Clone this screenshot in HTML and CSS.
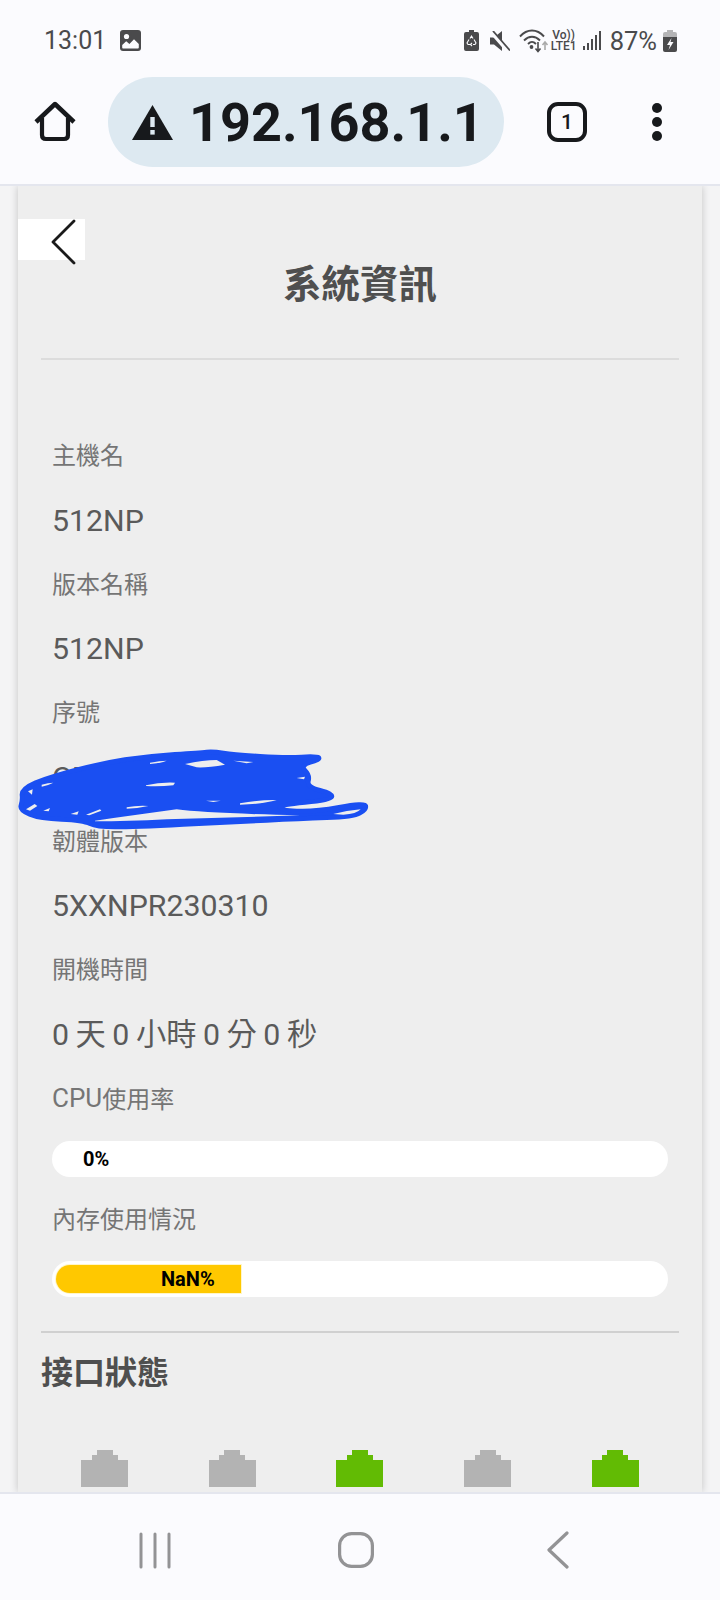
FILE: index.html

```html
<!DOCTYPE html>
<html lang="zh-TW">
<head>
  <meta charset="UTF-8" />
  <meta name="viewport" content="width=device-width, initial-scale=1.0"/>
  <title>系統資訊</title>
  <link rel="stylesheet" href="styles.css">
</head>
<body>
  <div class="phone">
    <div class="statusbar">
      <div class="status-left">
        <span class="time">13:01</span>
        <svg class="ico-gallery" width="21" height="21" viewBox="0 0 21 21">
          <rect x="0" y="0" width="21" height="21" rx="3" fill="#4a4a4c"/>
          <circle cx="6.5" cy="6.5" r="2.6" fill="#fbfbfe"/>
          <path d="M2.2 17.5v-2.6l4-3.6 3.2 2.6 4.6-4.6 4.8 4.8v3.4q0 .9-.9.9H3q-.8 0-.8-.9z" fill="#fbfbfe"/>
        </svg>
      </div>
      <div class="status-right">
        <svg class="ico-batt-saver" width="15" height="21" viewBox="0 0 15 21">
          <path d="M5 0h5v2h3q2 0 2 2v15q0 2-2 2H2q-2 0-2-2V4q0-2 2-2h3z" fill="#4a4a4c"/>
          <path d="M6 8.500l1.500-2.500 1.500 2.500M10 9.500l2 3.500-1 1.500H9M6.500 14.500H4l-1-1.500 2-3.500M8 13l-1.500 1.500L8 16" fill="none" stroke="#fbfbfe" stroke-width="1.100"/>
        </svg>
        <svg class="ico-mute" width="20" height="20" viewBox="0 0 20 20">
          <path d="M0 6.500h4L12 0v20l-8-6.500H0z" fill="#4a4a4c"/>
          <path d="M1 0.500l17 19.500" stroke="#fbfbfe" stroke-width="4"/>
          <path d="M3 0l17 19.500" stroke="#4a4a4c" stroke-width="1.800"/>
        </svg>
        <svg class="ico-wifi" width="30" height="24" viewBox="0 0 30 24">
          <g fill="none" stroke="#4a4a4c" stroke-width="1.900">
            <path d="M1 7.500C8-.5 18-.5 25 7.500"/>
            <path d="M5 11.500c5-5 11-5 16 0"/>
            <path d="M9 15c3-3 5-3 8 0"/>
          </g>
          <circle cx="12.500" cy="18" r="1.900" fill="#4a4a4c"/>
          <path d="M19 13v9M16.500 19.500l2.500 3 2.500-3" fill="none" stroke="#4a4a4c" stroke-width="1.600"/>
          <path d="M26 21v-8M23.500 16l2.500-3 2.500 3" fill="none" stroke="#aaaaaa" stroke-width="1.600"/>
        </svg>
        <span class="volte">Vo))<br>LTE1</span>
        <svg class="ico-signal" width="18" height="20" viewBox="0 0 18 20">
          <g fill="#4a4a4c">
            <rect x="0" y="15" width="2" height="4"/>
            <rect x="4" y="12" width="2" height="7"/>
            <rect x="8" y="8" width="2" height="11"/>
            <rect x="12" y="4" width="2" height="15"/>
            <rect x="16" y="0" width="2" height="19"/>
          </g>
        </svg>
        <span class="battery-pct">87%</span>
        <svg class="ico-battery" width="14" height="22" viewBox="0 0 14 22">
          <path d="M4 0h6v2h2q2 0 2 2v3H0V4q0-2 2-2h2z" fill="#b4b4b6"/>
          <path d="M0 7h14v13q0 2-2 2H2q-2 0-2-2z" fill="#4a4a4c"/>
          <path d="M8.500 8L4 15h3l-1.500 5 5-8H7.500z" fill="#fbfbfe"/>
        </svg>
      </div>
    </div>

    <div class="toolbar">
      <svg class="ico-home" width="42" height="42" viewBox="0 0 42 42">
        <path d="M2 21L21 3l19 18" fill="none" stroke="#17191c" stroke-width="4.500" stroke-linejoin="round"/>
        <path d="M8 17v17q0 4 4 4h18q4 0 4-4V17" fill="none" stroke="#17191c" stroke-width="4.200"/>
      </svg>
      <div class="urlbar">
        <svg class="ico-warn" width="41" height="35" viewBox="0 0 41 35">
          <path d="M20.500 0L41 35H0z" fill="#17191c"/>
          <rect x="18.300" y="12" width="4.400" height="10" fill="#dde9f1"/>
          <rect x="18.300" y="25" width="4.400" height="4.600" fill="#dde9f1"/>
        </svg>
        <span class="url">192.168.1.1</span>
      </div>
      <div class="tabs-btn">1</div>
      <div class="menu-btn"><i></i><i></i><i></i></div>
    </div>

    <div class="viewport">
      <div class="card">
        <div class="card-head">
          <div class="back-btn">
            <svg width="26" height="46" viewBox="0 0 26 46">
              <path d="M24 2L3 23l21 21" fill="none" stroke="#1a1a1a" stroke-width="2.800" stroke-linecap="round" stroke-linejoin="round"/>
            </svg>
          </div>
          <h2 class="title">系統資訊</h2>
        </div>

        <div class="info">
          <div class="row label">主機名</div>
          <div class="row value">512NP</div>
          <div class="row label">版本名稱</div>
          <div class="row value">512NP</div>
          <div class="row label">序號</div>
          <div class="row value serial">
            <span>CF</span>
            <!-- scribble covering the serial number -->
            <svg class="scribble" width="400" height="130" viewBox="0 0 1200 390">
              <path fill="#1a4ff2" stroke="#1a4ff2" stroke-width="14" stroke-linejoin="round" d="M66 188Q65 170 107 152Q150 135 225 115Q300 95 375 83Q450 72 525 67Q600 62 620 60Q640 58 670 63Q700 68 780 73Q860 78 905 75Q950 72 956 77Q962 82 931 91Q900 100 915 115Q930 130 925 147Q920 165 960 175Q1000 185 995 195Q990 205 915 211Q840 218 840 226Q840 235 890 237Q940 240 1017 226Q1095 212 1097 222Q1100 232 1080 243Q1060 255 980 257Q900 260 800 265Q700 270 550 277Q400 285 345 285Q290 285 270 275Q250 265 185 262Q120 260 89 247Q58 235 63 220Q68 205 66 188z"/>
              <g fill="#eeeeee" stroke="none">
                <path d="M555 96Q610 84 650 84L675 98Q620 108 590 106z"/>
                <path d="M438 160Q480 150 525 152L520 160Q480 164 438 162z"/>
                <path d="M720 214Q780 203 830 204 790 216 720 218z"/>
                <path d="M1000 246Q1040 236 1082 232 1070 246 1030 248z"/>
                <path d="M84 178L98 172 96 188z"/>
                <path d="M78 232L104 216 112 222 90 236z"/>
                <path d="M125 158Q145 152 160 152 145 160 125 164z"/>
                <path d="M130 236L150 228 146 238z"/>
                <path d="M212 246L236 238 232 248z"/>
                <path d="M258 248L300 232 304 236 268 250z"/>
                <path d="M380 226Q410 220 445 222 410 230 380 230z"/>
                <path d="M450 92Q480 86 500 86 480 94 450 96z"/>
                <path d="M700 86L760 90 740 94z"/>
                <path d="M618 206H662L640 210z"/>
                <path d="M285 266Q400 250 530 232 620 244 900 250 700 256 500 262 380 268 285 268z"/>
                <path d="M890 138L915 134 912 142z"/>
              </g>
            </svg>
          </div>
          <div class="row label">韌體版本</div>
          <div class="row value">5XXNPR230310</div>
          <div class="row label">開機時間</div>
          <div class="row value uptime">0 天 0 小時 0 分 0 秒</div>
          <div class="row label cpu-label"><span class="latin">CPU</span>使用率</div>
          <div class="bar-row cpu-row">
            <div class="bar"><span class="bar-text cpu-text">0%</span></div>
          </div>
          <div class="row label mem-label">內存使用情況</div>
          <div class="bar-row">
            <div class="bar"><div class="bar-fill" style="width: 185px"><span class="bar-text">NaN%</span></div></div>
          </div>
        </div>

        <div class="ports-section">
          <h3 class="subtitle">接口狀態</h3>
          <div class="ports">
            <div class="port"><i class="p1"></i><i class="p2"></i><i class="p3"></i></div>
            <div class="port"><i class="p1"></i><i class="p2"></i><i class="p3"></i></div>
            <div class="port on"><i class="p1"></i><i class="p2"></i><i class="p3"></i></div>
            <div class="port"><i class="p1"></i><i class="p2"></i><i class="p3"></i></div>
            <div class="port on"><i class="p1"></i><i class="p2"></i><i class="p3"></i></div>
          </div>
        </div>
      </div>
    </div>

    <div class="navbar">
      <svg class="nav-recent" width="32" height="38" viewBox="0 0 32 38">
        <path d="M2 3v33M16 3v33M30 3v33" stroke="#939395" stroke-width="3" stroke-linecap="round"/>
      </svg>
      <svg class="nav-home" width="36" height="38" viewBox="0 0 36 38">
        <rect x="1.600" y="2.600" width="32.800" height="32.800" rx="12" fill="none" stroke="#939395" stroke-width="3.200"/>
      </svg>
      <svg class="nav-back" width="22" height="38" viewBox="0 0 22 38">
        <path d="M20 2L2 19l18 17" fill="none" stroke="#939395" stroke-width="3.200" stroke-linecap="round" stroke-linejoin="round"/>
      </svg>
    </div>
  </div>
</body>
</html>
```

FILE: styles.css

```css
body {
  margin: 0;
  font-family: Roboto, "Noto Sans CJK TC", sans-serif;
  background: #fbfbfe;
}
h2, h3 {
  margin: 0;
}
svg {
  display: block;
  flex: none;
}
.phone {
  width: 720px;
  height: 1600px;
  display: flex;
  flex-direction: column;
  overflow: hidden;
}

/* status bar */
.statusbar {
  height: 77px;
  flex: none;
  padding: 4px 43px 0 44px;
  box-sizing: border-box;
  display: flex;
  align-items: center;
  justify-content: space-between;
  color: #4a4a4c;
}
.status-left {
  display: flex;
  align-items: center;
  gap: 14px;
}
.time {
  font-size: 25px;
}
.status-right {
  display: flex;
  align-items: center;
}
.ico-mute {
  margin-left: 11px;
}
.ico-wifi {
  margin-left: 9px;
}
.volte {
  width: 26px;
  margin-left: 2px;
  font-size: 12px;
  line-height: 11px;
  font-weight: 500;
  text-align: center;
  white-space: nowrap;
}
.ico-signal {
  margin-left: 6px;
}
.battery-pct {
  margin-left: 9px;
  font-size: 25.5px;
}
.ico-battery {
  margin-left: 6px;
}

/* browser toolbar */
.toolbar {
  height: 109px;
  flex: none;
  padding: 0 0 17px 34px;
  box-sizing: border-box;
  display: flex;
  align-items: center;
  border-bottom: 2px solid #e4e6ee;
}
.urlbar {
  width: 396px;
  height: 90px;
  margin-left: 32px;
  border-radius: 45px;
  background: #dde9f1;
  display: flex;
  align-items: center;
  padding-left: 24px;
  box-sizing: border-box;
}
.url {
  margin-left: 16px;
  font-size: 54px;
  font-weight: 700;
  color: #17191c;
  white-space: nowrap;
}
.tabs-btn {
  width: 40px;
  height: 40px;
  margin-left: 43px;
  border: 4px solid #17191c;
  border-radius: 11px;
  box-sizing: border-box;
  display: flex;
  align-items: center;
  justify-content: center;
  font-size: 21px;
  font-weight: 500;
  color: #17191c;
}
.menu-btn {
  margin-left: 65px;
  display: flex;
  flex-direction: column;
  gap: 4px;
}
.menu-btn i {
  width: 10px;
  height: 10px;
  border-radius: 50%;
  background: #17191c;
}

/* page */
.viewport {
  flex: 1;
  min-height: 0;
  background: #f4f4f5;
  overflow: hidden;
}
.card {
  margin: 0 18px;
  padding: 0 23px;
  height: 100%;
  background: #eeeeee;
  box-shadow: 0 0 8px rgba(0,0,0,0.2);
}
.card-head {
  padding-top: 34px;
  padding-bottom: 46px;
  border-bottom: 2px solid #dcdcdc;
}
.back-btn {
  width: 67px;
  height: 41px;
  margin-left: -23px;
  padding-left: 32px;
  box-sizing: border-box;
  background: white;
}
.back-btn svg {
  margin-top: -1px;
}
.title {
  height: 54px;
  margin-top: -2px;
  line-height: 54px;
  text-align: center;
  font-size: 38.5px;
  font-weight: 700;
  color: #4f4f4f;
}
.info {
  padding: 65px 0 0 11px;
}
.row {
  height: 64.25px;
  box-sizing: border-box;
  display: flex;
  align-items: center;
}
.label {
  padding-bottom: 7px;
  font-size: 24px;
  color: #757575;
}
.cpu-label {
  padding-bottom: 4px;
}
.latin {
  font-size: 26px;
}
.value {
  padding-bottom: 2px;
  font-size: 30.3px;
  color: #5a5a5a;
}
.uptime {
  padding-bottom: 6px;
  word-spacing: -1px;
}
.serial {
  position: relative;
}
.scribble {
  position: absolute;
  left: -52px;
  top: -14px;
}
.mem-label {
  height: 58px;
}
.bar-row {
  height: 60px;
  box-sizing: border-box;
  padding-bottom: 2px;
  display: flex;
  align-items: center;
}
.cpu-row {
  padding-bottom: 5px;
}
.bar {
  width: 616px;
  height: 36px;
  padding: 4px;
  box-sizing: border-box;
  border-radius: 18px;
  background: white;
  display: flex;
  align-items: center;
}
.bar-text {
  font-size: 20px;
  font-weight: 700;
  color: #000;
}
.cpu-text {
  margin-left: 27px;
}
.bar-fill {
  height: 28px;
  box-sizing: border-box;
  padding-left: 105px;
  display: flex;
  align-items: center;
  background: #ffc800;
  border-radius: 14px 0 0 14px;
  box-shadow: 0 0 0 1px #fff6c8;
}
.ports-section {
  margin-top: 21px;
  border-top: 2px solid #d0d0d0;
}
.subtitle {
  margin-top: 16px;
  height: 48px;
  line-height: 48px;
  font-size: 32px;
  font-weight: 700;
  color: #4f4f4f;
}
.ports {
  margin-top: 53px;
  display: grid;
  grid-template-columns: repeat(5, 1fr);
  justify-items: center;
}
.port {
  width: 47px;
  color: #b3b3b3;
  display: flex;
  flex-direction: column;
  align-items: center;
}
.port.on {
  color: #62bb04;
}
.port i {
  display: block;
  background: currentColor;
}
.port .p1 {
  width: 16px;
  height: 5px;
}
.port .p2 {
  width: 26px;
  height: 5px;
}
.port .p3 {
  width: 47px;
  height: 27px;
}

/* android nav */
.navbar {
  height: 108px;
  flex: none;
  background: #fbfbfe;
  border-top: 2px solid #e4e6ee;
  box-sizing: border-box;
  padding: 37px 0 0 139px;
  display: flex;
  align-items: flex-start;
}
.nav-home {
  margin-left: 167px;
}
.nav-back {
  margin-left: 173px;
}
```
